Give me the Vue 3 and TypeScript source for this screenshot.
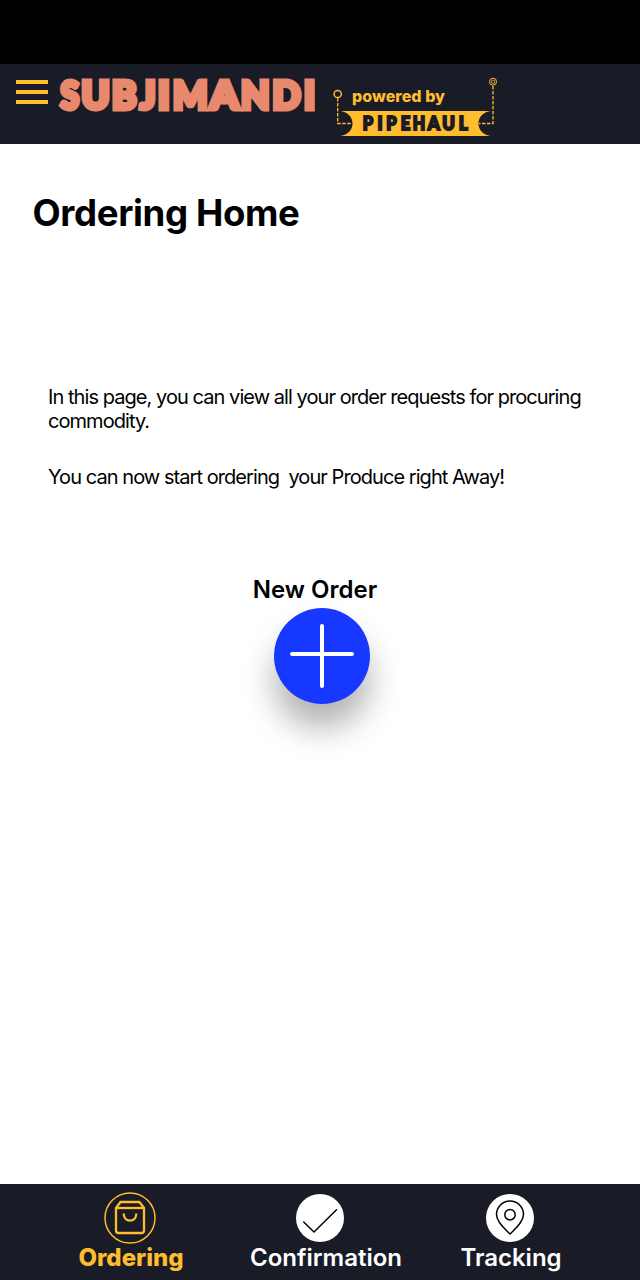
<script setup lang="ts">
import { ref } from 'vue'

type TabId = 'ordering' | 'confirmation' | 'tracking'

interface Tab {
  id: TabId
  label: string
}

interface Letter {
  char: string
  x: number
  width: number
}

const tabs: Tab[] = [
  { id: 'ordering', label: 'Ordering' },
  { id: 'confirmation', label: 'Confirmation' },
  { id: 'tracking', label: 'Tracking' },
]

const brand: Letter[] = [
  { char: 'S', x: 60.5, width: 18.5 },
  { char: 'U', x: 81.5, width: 28 },
  { char: 'B', x: 112, width: 24.5 },
  { char: 'J', x: 140, width: 15.5 },
  { char: 'I', x: 158, width: 11.5 },
  { char: 'M', x: 173, width: 34.5 },
  { char: 'A', x: 210, width: 28.5 },
  { char: 'N', x: 241, width: 28.5 },
  { char: 'D', x: 272.5, width: 28 },
  { char: 'I', x: 304, width: 11 },
]

const partner: Letter[] = [
  { char: 'P', x: 362.7, width: 10.3 },
  { char: 'I', x: 377.5, width: 5 },
  { char: 'P', x: 386.2, width: 10.3 },
  { char: 'E', x: 400.8, width: 9.5 },
  { char: 'H', x: 412.8, width: 12.4 },
  { char: 'A', x: 427.7, width: 12 },
  { char: 'U', x: 442.2, width: 12.6 },
  { char: 'L', x: 458.8, width: 9 },
]

const active = ref<TabId>('ordering')
</script>

<template>
  <div class="screen">
    <div class="status-bar"></div>
    <header class="header">
      <button class="menu" aria-label="Menu">
        <span></span>
        <span></span>
        <span></span>
      </button>
      <svg class="brand" width="270" height="60" viewBox="54 73 270 60">
        <text class="brand-text" y="108.500"><tspan v-for="(l, i) in brand" :key="i" :x="l.x" :textLength="l.width" lengthAdjust="spacingAndGlyphs">{{ l.char }}</tspan></text>
      </svg>
      <svg class="powered" width="170" height="64" viewBox="330 76 170 64">
        <text class="powered-text" x="352" y="102" textLength="93">powered by</text>
        <path d="M340.500 111H490.500C482 112.500 478.500 118 478.500 123.500S482 134.500 490.500 136H340.500C349 134.500 352.500 129 352.500 123.500S349 112.500 340.500 111Z" fill="#ffbc2c" />
        <g fill="none" stroke="#ffbc2c">
          <circle cx="337.700" cy="94" r="3.600" stroke-width="1.500" />
          <path d="M337.700 98V123.500H352" stroke-width="1.300" stroke-dasharray="3.500 1.500" />
          <circle cx="493" cy="81.700" r="3.500" stroke-width="1" />
          <circle cx="493" cy="81.700" r="1.700" stroke-width=".8" />
          <path d="M493 86V123.500H479" stroke-width="1.300" stroke-dasharray="3.500 1.500" />
        </g>
        <text class="pipehaul-text" y="130.300"><tspan v-for="(l, i) in partner" :key="i" :x="l.x" :textLength="l.width" lengthAdjust="spacingAndGlyphs">{{ l.char }}</tspan></text>
      </svg>
    </header>

    <main class="content">
      <h1>Ordering Home</h1>
      <section class="intro">
        <p>In this page, you can view all your order requests for procuring commodity.</p>
        <p>You can now start ordering&nbsp; your Produce right Away!</p>
      </section>
      <section class="new-order">
        <h2>New Order</h2>
        <button class="add" aria-label="New Order">
          <svg width="96" height="96" viewBox="0 0 96 96">
            <path d="M48 18V78M18 46H78" stroke="#fff" stroke-width="4" stroke-linecap="round" />
          </svg>
        </button>
      </section>
    </main>

    <nav class="tabs">
      <button
        v-for="tab in tabs"
        :key="tab.id"
        class="tab"
        :class="[tab.id, { active: active === tab.id }]"
        @click="active = tab.id"
      >
        <svg v-if="tab.id === 'ordering'" width="52" height="52" viewBox="0 0 52 52" fill="none" stroke="currentColor">
          <circle cx="26" cy="26" r="25" stroke-width="1.500" />
          <g stroke-width="2.300" stroke-linejoin="round">
            <path d="M12 16L16.500 10H35.500L40 16V38.500Q40 41 37.500 41H14.500Q12 41 12 38.500Z" />
            <path d="M12 16H40" />
            <path d="M19.700 21.500C19.700 31 32.300 31 32.300 21.500" />
          </g>
        </svg>
        <svg v-else-if="tab.id === 'confirmation'" width="52" height="52" viewBox="0 0 52 52" fill="none">
          <circle cx="26" cy="26" r="24" fill="#fff" />
          <path d="M9.700 30L20 40L42.500 17.700" stroke="#000" stroke-width="1.500" stroke-linecap="round" />
        </svg>
        <svg v-else width="52" height="52" viewBox="0 0 52 52" fill="none">
          <circle cx="26" cy="26" r="24" fill="#fff" />
          <g stroke="#000" stroke-width="1.500">
            <path d="M26 42C22 38 12.500 30.500 12.500 22.500A13.500 13.500 0 0 1 39.500 22.500C39.500 30.500 30 38 26 42Z" stroke-linejoin="round" />
            <circle cx="26" cy="22.700" r="5.200" />
          </g>
        </svg>
        <span>{{ tab.label }}</span>
      </button>
    </nav>
  </div>
</template>

<style>
body {
  margin: 0;
}
</style>

<style scoped>
.screen {
  display: flex;
  flex-direction: column;
  width: 640px;
  height: 1280px;
  overflow: hidden;
  background: #fff;
  color: #000;
  font-family: Inter, 'Liberation Sans', sans-serif;
}
button {
  padding: 0;
  border: 0;
  background: none;
  font: inherit;
  color: inherit;
}
svg {
  display: block;
  flex: none;
}
.status-bar {
  height: 64px;
  flex: none;
  background: #000;
}
.header {
  display: flex;
  align-items: flex-start;
  height: 80px;
  flex: none;
  padding-left: 16px;
  background: #191b27;
}
.menu {
  display: flex;
  flex-direction: column;
  gap: 6px;
  width: 32px;
  margin: 16px 6px 0 0;
}
.menu span {
  height: 4px;
  background: #ffbc2c;
}
.brand {
  margin-top: 9px;
  overflow: visible;
}
.brand-text {
  font: 900 38px Lato, sans-serif;
  fill: #e8886c;
  stroke: #e8886c;
  stroke-width: 5px;
}
.powered {
  margin: 12px 0 0 6px;
}
.powered-text {
  font: 800 16px Inter, sans-serif;
  fill: #ffbc2c;
}
.pipehaul-text {
  font: 900 18px Lato, sans-serif;
  fill: #191b27;
  stroke: #191b27;
  stroke-width: 2px;
}
.content {
  flex: 1;
}
h1 {
  margin: 47px 0 0 32.5px;
  font-size: 36.6px;
  line-height: 45px;
  font-weight: 700;
  letter-spacing: -0.35px;
}
.intro {
  margin: 149px 48px 0;
}
.intro p {
  margin: 0 0 32px;
  font-size: 20px;
  line-height: 24px;
  letter-spacing: -0.94px;
}
.new-order {
  display: flex;
  flex-direction: column;
  align-items: center;
  width: 126px;
  margin: 86px 0 0 252px;
}
h2 {
  margin: 0;
  font-size: 24px;
  line-height: 30px;
  font-weight: 600;
  white-space: nowrap;
}
.add {
  width: 96px;
  height: 96px;
  margin: 3px 0 0 14px;
  border-radius: 50%;
  background: #1739ff;
  box-shadow: 0 24px 32px rgba(0, 0, 0, 0.3);
}
.tabs {
  display: grid;
  grid-template-columns: 190px 190px 190px;
  justify-content: center;
  box-sizing: border-box;
  height: 96px;
  flex: none;
  padding-top: 8px;
  background: #191b27;
  color: #fff;
}
.tab {
  display: flex;
  flex-direction: column;
  align-items: center;
  font-size: 24px;
  line-height: 29px;
  font-weight: 600;
}
.tab span {
  margin-top: -1px;
}
.tab.confirmation span {
  margin-left: 12px;
}
.tab.tracking span {
  margin-left: 2px;
}
.tab.active {
  color: #ffbc2c;
  font-weight: 800;
}
.tab.active span {
  margin-left: 2px;
}
</style>
